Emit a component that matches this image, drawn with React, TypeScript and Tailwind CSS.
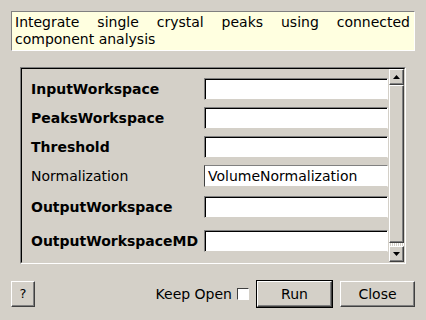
import React from 'react'

const fields = [
  { name: 'InputWorkspace', bold: true, value: '', mt: 'mt-[9px]' },
  { name: 'PeaksWorkspace', bold: true, value: '', mt: 'mt-[7px]' },
  { name: 'Threshold', bold: true, value: '', mt: 'mt-[7px]' },
  { name: 'Normalization', bold: false, value: 'VolumeNormalization', mt: 'mt-[7px]' },
  { name: 'OutputWorkspace', bold: true, value: '', mt: 'mt-[9px]' },
  { name: 'OutputWorkspaceMD', bold: true, value: '', mt: 'mt-[12px]' },
]

const raised =
  'bg-[#d4d0c8] border border-t-white border-l-white border-r-[#404040] border-b-[#404040] shadow-[inset_-1px_-1px_0_#808080]'

function Arrow({ up }: { up: boolean }) {
  return (
    <svg width="7" height="4" viewBox="0 0 7 4">
      {up ? <polygon points="3.5,0 7,4 0,4" fill="#000" /> : <polygon points="0,0 7,0 3.5,4" fill="#000" />}
    </svg>
  )
}

function ScrollBar() {
  return (
    <div className="w-[15px] shrink-0 flex flex-col">
      <div className={`${raised} h-[16px] flex items-center justify-center`}>
        <Arrow up />
      </div>
      <div className={`${raised} flex-1`} />
      <div className="h-[3px] bg-[repeating-linear-gradient(90deg,#ffffff_0px,#ffffff_1px,#d4d0c8_1px,#d4d0c8_2px)]" />
      <div className={`${raised} h-[16px] flex items-center justify-center`}>
        <Arrow up={false} />
      </div>
    </div>
  )
}

function Field({ f }: { f: (typeof fields)[number] }) {
  return (
    <div className={`${f.mt} flex items-center h-[22px]`}>
      <div className={`w-[182px] shrink-0 pl-[9px] text-[14px] whitespace-nowrap ${f.bold ? 'font-bold' : ''}`}>{f.name}</div>
      {f.bold ? (
        <div className="w-[184px] shrink-0 h-[22px] bg-white border border-t-[#808080] border-l-[#808080] border-r-white border-b-[#d4d0c8] shadow-[inset_1px_1px_0_#000]" />
      ) : (
        <div className="w-[184px] shrink-0 h-[22px] bg-white border border-t-[#808080] border-l-[#404040] border-r-white border-b-[#d4d0c8] pl-[3px] text-[14px] leading-[20px]">
          {f.value}
        </div>
      )}
    </div>
  )
}

export default function App() {
  return (
    <div className="w-[426px] h-[320px] bg-[#d4d0c8] font-['DejaVu_Sans',sans-serif] text-black flex flex-col pt-[11px] px-[11px]">
      <div className="h-[40px] bg-[#ffffe0] border border-t-[#808080] border-l-[#808080] border-r-white border-b-white pl-[3px] pr-[4px] pt-[2px] text-[14px] leading-[17px] text-justify">
        Integrate single crystal peaks using connected component analysis
      </div>

      <div className="mt-[16px] mx-[9px] h-[197px] border border-t-[#808080] border-l-[#808080] border-r-white border-b-white">
        <div className="h-full flex border border-t-black border-l-black border-r-[#d4d0c8] border-b-[#d4d0c8]">
          <div className="flex-1 flex flex-col overflow-hidden">
            {fields.map((f) => (
              <Field key={f.name} f={f} />
            ))}
          </div>
          <ScrollBar />
        </div>
      </div>

      <div className="mt-[16px] flex items-center">
        <button className={`${raised} w-[24px] h-[26px] text-[13px]`}>?</button>
        <div className="flex-1" />
        <span className="text-[14px]">Keep Open</span>
        <div className="ml-[5px] w-[12px] h-[12px] bg-white border border-t-[#404040] border-l-[#404040] border-r-white border-b-white" />
        <div className="ml-[7px] border border-black">
          <button className={`${raised} w-[75px] h-[26px] text-[14px]`}>Run</button>
        </div>
        <button className={`${raised} ml-[7px] w-[75px] h-[26px] text-[14px]`}>Close</button>
      </div>
    </div>
  )
}
